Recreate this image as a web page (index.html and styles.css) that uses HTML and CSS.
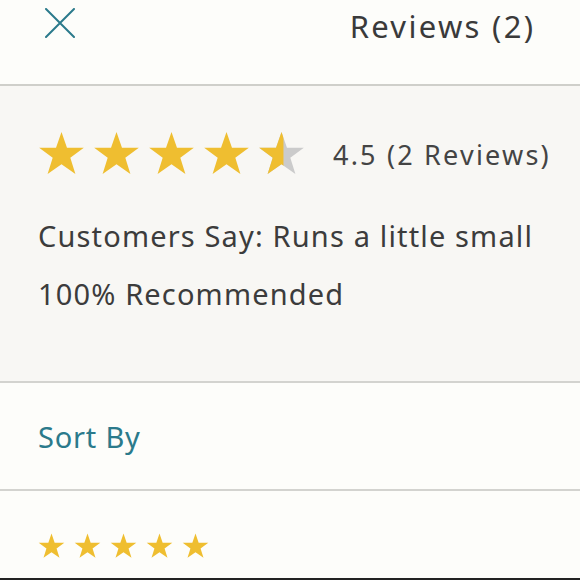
FILE: index.html
```html
<!DOCTYPE html>
<html lang="en">
<head>
<meta charset="utf-8">
<title>Reviews</title>
<link rel="stylesheet" href="styles.css">
</head>
<body>
<div class="page">
  <header class="header">
    <svg class="close" viewBox="0 0 30 30" width="30" height="30" aria-label="Close">
      <path d="M1 1 L29 29 M29 1 L1 29" stroke="#2b7a8b" stroke-width="2" stroke-linecap="round" fill="none"/>
    </svg>
    <h1 class="title">Reviews (2)</h1>
  </header>

  <section class="summary">
    <div class="rating-row">
      <div class="stars-big">
        <svg class="star" viewBox="0 0 24 24"><path class="gold" d="M12 0.5 L14.8 8.6 L23.4 8.6 L16.5 13.7 L19.1 22 L12 17 L4.9 22 L7.5 13.7 L0.6 8.6 L9.2 8.6 Z"/></svg>
        <svg class="star" viewBox="0 0 24 24"><path class="gold" d="M12 0.5 L14.8 8.6 L23.4 8.6 L16.5 13.7 L19.1 22 L12 17 L4.9 22 L7.5 13.7 L0.6 8.6 L9.2 8.6 Z"/></svg>
        <svg class="star" viewBox="0 0 24 24"><path class="gold" d="M12 0.5 L14.8 8.6 L23.4 8.6 L16.5 13.7 L19.1 22 L12 17 L4.9 22 L7.5 13.7 L0.6 8.6 L9.2 8.6 Z"/></svg>
        <svg class="star" viewBox="0 0 24 24"><path class="gold" d="M12 0.5 L14.8 8.6 L23.4 8.6 L16.5 13.7 L19.1 22 L12 17 L4.9 22 L7.5 13.7 L0.6 8.6 L9.2 8.6 Z"/></svg>
        <svg class="star" viewBox="0 0 24 24">
          <defs><clipPath id="lefthalf"><rect x="0" y="0" width="13" height="24"/></clipPath></defs>
          <path class="grey" d="M12 0.5 L14.8 8.6 L23.4 8.6 L16.5 13.7 L19.1 22 L12 17 L4.9 22 L7.5 13.7 L0.6 8.6 L9.2 8.6 Z"/>
          <path class="gold" clip-path="url(#lefthalf)" d="M12 0.5 L14.8 8.6 L23.4 8.6 L16.5 13.7 L19.1 22 L12 17 L4.9 22 L7.5 13.7 L0.6 8.6 L9.2 8.6 Z"/>
        </svg>
      </div>
      <span class="score">4.5 (2 Reviews)</span>
    </div>
    <p class="line first">Customers Say: Runs a little small</p>
    <p class="line">100% Recommended</p>
  </section>

  <section class="sort">
    <span class="sort-label">Sort By</span>
  </section>

  <section class="review">
    <div class="stars-small">
      <svg class="star-s" viewBox="0 0 24 24"><path class="gold" d="M12 0.5 L14.8 8.6 L23.4 8.6 L16.5 13.7 L19.1 22 L12 17 L4.9 22 L7.5 13.7 L0.6 8.6 L9.2 8.6 Z"/></svg>
      <svg class="star-s" viewBox="0 0 24 24"><path class="gold" d="M12 0.5 L14.8 8.6 L23.4 8.6 L16.5 13.7 L19.1 22 L12 17 L4.9 22 L7.5 13.7 L0.6 8.6 L9.2 8.6 Z"/></svg>
      <svg class="star-s" viewBox="0 0 24 24"><path class="gold" d="M12 0.5 L14.8 8.6 L23.4 8.6 L16.5 13.7 L19.1 22 L12 17 L4.9 22 L7.5 13.7 L0.6 8.6 L9.2 8.6 Z"/></svg>
      <svg class="star-s" viewBox="0 0 24 24"><path class="gold" d="M12 0.5 L14.8 8.6 L23.4 8.6 L16.5 13.7 L19.1 22 L12 17 L4.9 22 L7.5 13.7 L0.6 8.6 L9.2 8.6 Z"/></svg>
      <svg class="star-s" viewBox="0 0 24 24"><path class="gold" d="M12 0.5 L14.8 8.6 L23.4 8.6 L16.5 13.7 L19.1 22 L12 17 L4.9 22 L7.5 13.7 L0.6 8.6 L9.2 8.6 Z"/></svg>
    </div>
  </section>
</div>
</body>
</html>
```

FILE: styles.css
```css
html, body {
  margin: 0;
  padding: 0;
}
body {
  background: #fdfdfa;
  font-family: "Noto Sans", Lato, sans-serif;
  color: #3c3c3c;
}
.page {
  width: 580px;
  height: 580px;
  overflow: hidden;
  display: flex;
  flex-direction: column;
  border-bottom: 2px solid #222;
  box-sizing: border-box;
}
.header {
  height: 86px;
  box-sizing: border-box;
  display: flex;
  justify-content: space-between;
  align-items: flex-start;
  padding: 8px 47px 0 45px;
  border-bottom: 2px solid #cfcfca;
}
.close {
  display: block;
}
.title {
  margin: 0 -2.3px 0 0;
  font-size: 31px;
  font-weight: 400;
  line-height: 36px;
  color: #3a3a3a;
  letter-spacing: 2.3px;
}
.summary {
  background: #f8f7f4;
  height: 297px;
  box-sizing: border-box;
  padding: 45px 20px 0 38px;
  border-bottom: 2px solid #d3d3cf;
}
.rating-row {
  display: flex;
  align-items: center;
  gap: 28px;
}
.stars-big {
  display: flex;
  flex-shrink: 0;
  gap: 8px;
}
.star {
  width: 47px;
  height: 47px;
  display: block;
  flex-shrink: 0;
}
.gold { fill: #efbe30; }
.grey { fill: #cbcbcb; }
.score {
  font-size: 27px;
  line-height: 30px;
  letter-spacing: 2.2px;
  white-space: nowrap;
  color: #444;
}
.line {
  margin: 0;
  font-size: 29px;
  line-height: 58px;
  letter-spacing: 1.15px;
  white-space: nowrap;
}
.line.first {
  margin-top: 29px;
}
.sort {
  height: 108px;
  box-sizing: border-box;
  display: flex;
  align-items: center;
  padding: 0 38px;
  border-bottom: 2px solid #d3d3cf;
}
.sort-label {
  font-size: 29px;
  color: #2b7a8b;
  letter-spacing: 0.8px;
}
.review {
  padding: 42px 38px 0 38px;
}
.stars-small {
  display: flex;
  gap: 9px;
}
.star-s {
  width: 27px;
  height: 27px;
  display: block;
}
```
